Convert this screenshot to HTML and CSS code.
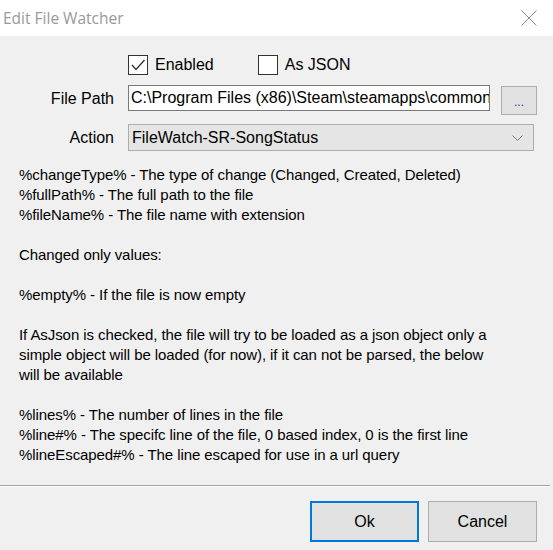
FILE: index.html
```html
<!DOCTYPE html>
<html>
<head>
<meta charset="utf-8">
<link rel="stylesheet" href="styles.css">
</head>
<body>
<div class="window">
  <div class="titlebar">
    <span class="title">Edit File Watcher</span>
    <svg class="close" width="16" height="16" viewBox="0 0 16 16"><path d="M0.5 0.5 L15.5 15.5 M15.5 0.5 L0.5 15.5" stroke="#8a8a8a" stroke-width="1" fill="none"/></svg>
  </div>
  <div class="content">
    <div class="row checks">
      <label class="check">
        <span class="box"><svg width="18" height="18" viewBox="0 0 18 18"><path d="M3 9 L7 13.5 L15.5 4" stroke="#333" stroke-width="1.3" fill="none"/></svg></span>
        <span>Enabled</span>
      </label>
      <label class="check">
        <span class="box"></span>
        <span>As JSON</span>
      </label>
    </div>
    <div class="row field">
      <span class="lbl lbl-path">File Path</span>
      <div class="input"><span class="val">C:\Program Files (x86)\Steam\steamapps\common\</span></div>
      <div class="browse">...</div>
    </div>
    <div class="row field2">
      <span class="lbl">Action</span>
      <div class="combo">
        <span>FileWatch-SR-SongStatus</span>
        <svg width="11" height="6" viewBox="0 0 11 6"><path d="M0.5 0.5 L5.5 5.5 L10.5 0.5" stroke="#777" stroke-width="1" fill="none"/></svg>
      </div>
    </div>
    <div class="desc">
      <p>%changeType% - The type of change (Changed, Created, Deleted)<br>%fullPath% - The full path to the file<br>%fileName% - The file name with extension</p>
      <p>Changed only values:</p>
      <p>%empty% - If the file is now empty</p>
      <p>If AsJson is checked, the file will try to be loaded as a json object only a simple object will be loaded (for now), if it can not be parsed, the below will be available</p>
      <p>%lines% - The number of lines in the file<br>%line#% - The specifc line of the file, 0 based index, 0 is the first line<br>%lineEscaped#% - The line escaped for use in a url query</p>
    </div>
  </div>
  <div class="sep"></div>
  <div class="buttons">
    <div class="btn primary">Ok</div>
    <div class="btn">Cancel</div>
  </div>
</div>
</body>
</html>
```
FILE: styles.css
```css
* { box-sizing: border-box; }
html, body { margin: 0; padding: 0; }
body {
  width: 553px;
  height: 550px;
  background: #f0f0f0;
  font-family: "Liberation Sans", Arial, sans-serif;
  font-size: 16px;
  color: #000;
  overflow: hidden;
}
.window { display: flex; flex-direction: column; height: 550px; }
.titlebar {
  height: 36px;
  flex: none;
  background: #fff;
  display: flex;
  align-items: center;
  justify-content: space-between;
  padding: 0 16px 0 3px;
}
.title {
  font-family: "Open Sans", "Noto Sans", sans-serif;
  font-size: 15.5px;
  color: #999;
  margin-top: -1px;
}
.close { margin-top: -1px; }
.content { padding-top: 18px; flex: 1; }
.row { display: flex; align-items: center; }
.checks { padding-left: 128px; height: 20px; }
.check { display: flex; align-items: center; gap: 7px; margin-top: 1px; }
.check + .check { margin-left: 44px; }
.box {
  width: 20px; height: 20px;
  border: 1px solid #333;
  background: #fff;
  display: flex; align-items: center; justify-content: center;
}
.lbl { width: 114px; text-align: right; }
.field { margin-top: 11px; height: 30px; align-items: flex-start; }
.lbl-path { margin-top: 5px; }
.input {
  margin-left: 14px;
  width: 362px;
  height: 26px;
  border: 1px solid #7a7a7a;
  background: #fff;
  overflow: hidden;
  white-space: nowrap;
  padding-left: 2px;
  display: flex; align-items: center;
}
.val { flex: none; }
.browse {
  margin-left: 11px;
  width: 36px; height: 29px;
  background: #e1e1e1;
  border: 1px solid #adadad;
  color: #1a3e8c;
  font-size: 12px;
  display: flex; align-items: flex-end; justify-content: center;
  padding-bottom: 5px;
  margin-top: 1px;
}
.field2 { margin-top: 9px; height: 27px; }
.combo {
  margin-left: 14px;
  width: 406px; height: 27px;
  background: #e5e5e5;
  border: 1px solid #adadad;
  display: flex; align-items: center; justify-content: space-between;
  padding: 0 10px 0 3px;
}
.desc {
  padding: 14px 0 0 19px;
  width: 495px;
  line-height: 20px;
  font-size: 15px;
  letter-spacing: -0.08px;
}
.desc p { margin: 0 0 20px 0; }
.sep {
  flex: none;
  height: 2px;
  border-top: 1px solid #a0a0a0;
  border-bottom: 1px solid #fff;
  width: 550px;
}
.buttons {
  flex: none;
  display: flex;
  justify-content: flex-end;
  gap: 9px;
  padding: 14px 16px 15px 0;
}
.btn {
  width: 109px; height: 41px;
  background: #e1e1e1;
  border: 1px solid #adadad;
  display: flex; align-items: center; justify-content: center;
}
.btn.primary { border: 2px solid #0078d7; }
```
